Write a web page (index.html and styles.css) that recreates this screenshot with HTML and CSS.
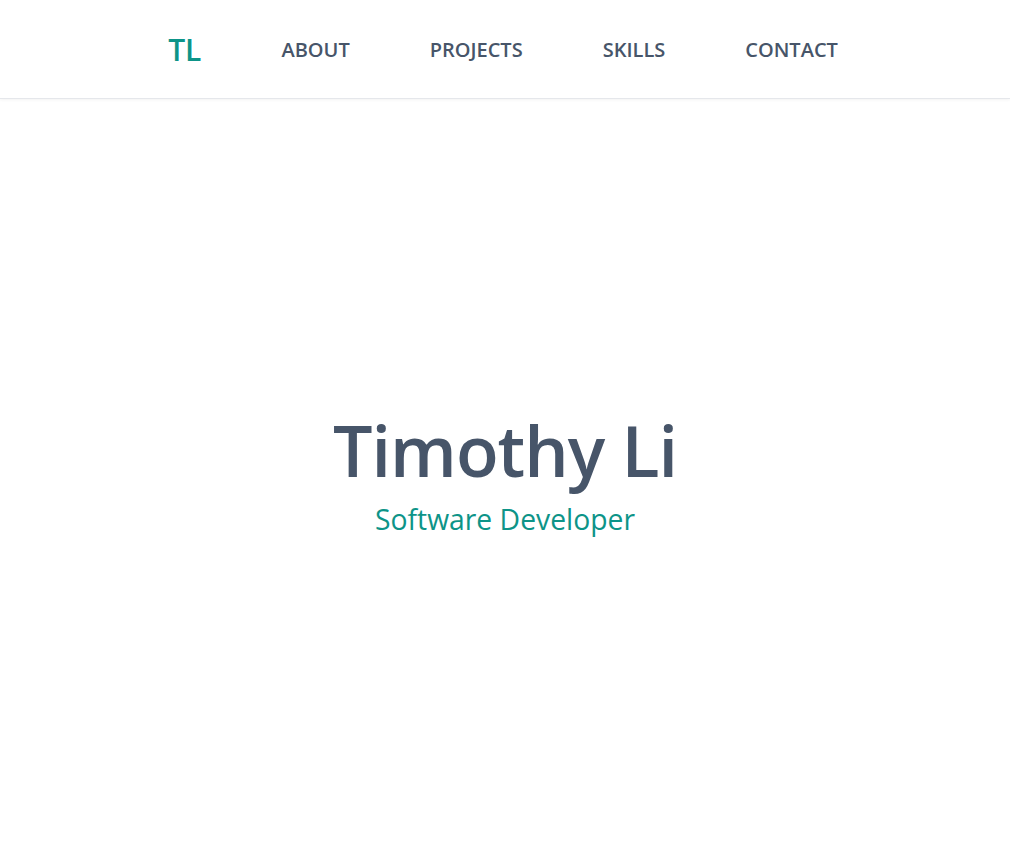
FILE: index.html
```html
<!DOCTYPE html>
<html lang="en">
<head>
<meta charset="utf-8">
<title>Timothy Li</title>
<link rel="stylesheet" href="styles.css">
</head>
<body>
<header class="site-header">
  <nav class="nav">
    <a class="logo" href="#">TL</a>
    <a class="nav-link" href="#about">ABOUT</a>
    <a class="nav-link" href="#projects">PROJECTS</a>
    <a class="nav-link" href="#skills">SKILLS</a>
    <a class="nav-link" href="#contact">CONTACT</a>
  </nav>
</header>
<main class="hero">
  <h1 class="hero-title">Timothy Li</h1>
  <p class="hero-subtitle">Software Developer</p>
</main>
</body>
</html>
```
FILE: styles.css
```css
* { box-sizing: border-box; }
html, body { margin: 0; padding: 0; }
body {
  font-family: "Open Sans", "Noto Sans", sans-serif;
  background: #ffffff;
  color: #475569;
}
.site-header {
  height: 99px;
  border-bottom: 1px solid #e5e7eb;
  box-shadow: 0 1px 3px rgba(0,0,0,0.05);
  display: flex;
  align-items: center;
  justify-content: center;
}
.nav {
  display: flex;
  align-items: center;
  gap: 80px;
  margin-left: -4px;
}
.nav a { text-decoration: none; }
.logo {
  font-size: 30px;
  font-weight: 600;
  color: #0d9488;
}
.nav-link {
  font-size: 20px;
  font-weight: 600;
  color: #475569;
}
.hero {
  height: 748px;
  padding-top: 8px;
  display: flex;
  flex-direction: column;
  align-items: center;
  justify-content: center;
}
.hero-title {
  margin: 0;
  font-size: 70px;
  font-weight: 600;
  letter-spacing: -1px;
  line-height: 72px;
  color: #475569;
}
.hero-subtitle {
  margin: 12px 0 0;
  font-size: 28.3px;
  line-height: 42px;
  color: #0d9488;
}
```
